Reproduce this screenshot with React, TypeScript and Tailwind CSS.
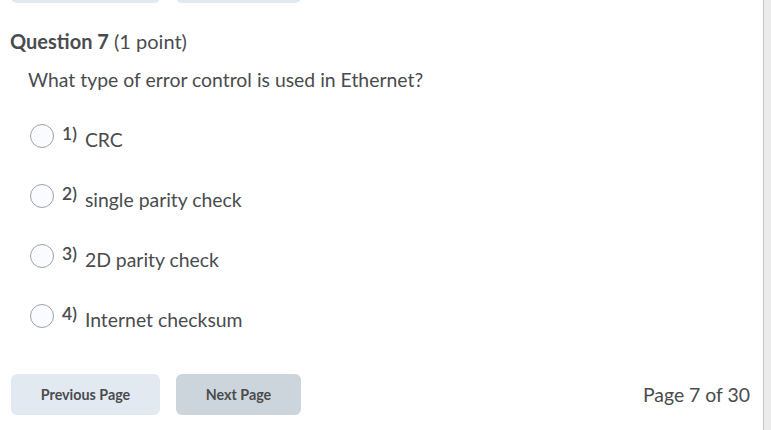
import React from "react";

const options = ["CRC", "single parity check", "2D parity check", "Internet checksum"];

export default function App() {
  return (
    <div className="flex w-full h-[430px] overflow-hidden bg-white text-[#494c4e]" style={{ fontFamily: "Lato, 'Noto Sans', sans-serif" }}>
      <div className="flex-1 flex flex-col">
        {/* previous question's nav buttons, scrolled off the top */}
        <div className="flex gap-4 pl-[11px] -mt-[38px]">
          <div className="w-[149px] h-[41px] rounded-md bg-[#e3e9f1]" />
          <div className="w-[125px] h-[41px] rounded-md bg-[#e3e9f1]" />
        </div>

        <h2 className="mt-[26px] pl-[10px] text-[20px] leading-[25px]">
          <span className="font-bold">Question 7</span> (1 point)
        </h2>

        <p className="mt-[14px] pl-[28px] text-[19.4px] leading-[24px]">
          What type of error control is used in Ethernet?
        </p>

        <div className="mt-[32px] pl-[30px] flex flex-col gap-[36px]">
          {options.map((opt, i) => (
            <label key={opt} className="flex items-center h-[24px]">
              <span className="w-[24px] h-[24px] rounded-full border border-[#9ea1a5] bg-[#f9fbff]" />
              <span className="ml-[8px] -mt-[4px] text-[17.5px] font-semibold">{i + 1})</span>
              <span className="ml-[8px] mt-[8px] text-[19.4px]">{opt}</span>
            </label>
          ))}
        </div>

        <div className="mt-auto mb-[15px] flex items-center pl-[11px] pr-[13px]">
          <button className="w-[149px] h-[41px] rounded-md bg-[#e3e9f1] text-[14.3px] font-bold">
            Previous Page
          </button>
          <button className="ml-[16px] w-[125px] h-[41px] rounded-md bg-[#cdd5dc] text-[14.3px] font-bold">
            Next Page
          </button>
          <span className="ml-auto text-[19.4px]">Page 7 of 30</span>
        </div>
      </div>
      <div className="w-[8px] h-full border-l border-[#c6c6c6] bg-[#ebebeb]" />
    </div>
  );
}
